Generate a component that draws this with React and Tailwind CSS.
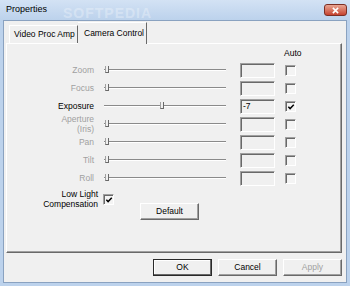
import React from "react";

const font = { fontFamily: '"Liberation Sans", Arial, sans-serif' };

const rows = [
  { label: ["Zoom"], pos: 0 },
  { label: ["Focus"], pos: 0 },
  { label: ["Exposure"], pos: 55, enabled: true, value: "-7", auto: true },
  { label: ["Aperture", "(Iris)"], pos: 0 },
  { label: ["Pan"], pos: 0 },
  { label: ["Tilt"], pos: 0 },
  { label: ["Roll"], pos: 0 },
];

function Check({ checked }) {
  return (
    <div className="relative h-[11px] w-[11px] border-t border-l border-t-[#a0a0a0] border-l-[#a0a0a0] border-b border-r border-b-white border-r-white bg-[#f4f4f4] shadow-[inset_1px_1px_0_#696969]">
      {checked && (
        <svg viewBox="0 0 9 9" className="absolute left-[1px] top-[1px] h-[8px] w-[8px]">
          <path d="M1.5 4.2 L3.5 6.3 L7.6 2" fill="none" stroke="#000" strokeWidth="1.6" />
        </svg>
      )}
    </div>
  );
}

function Slider({ pos }) {
  return (
    <div className="relative flex h-[18px] w-[122px] items-center">
      <div className="h-[2px] w-full border-t border-t-[#8a8a8a] border-b border-b-white" />
      <div
        className="absolute top-[5px] h-[7px] w-[4px] border-r border-b border-r-[#696969] border-b-[#696969] border-l border-l-[#a0a0a0] bg-[#f0f0f0]"
        style={{ left: pos + 1 }}
      />
    </div>
  );
}

function Button({ children, primary, disabled }) {
  return (
    <div
      className={
        "flex h-[17px] w-[59px] items-center justify-center border text-[8.5px] bg-[#f0f0f0] " +
        (primary
          ? "border-[#2a2a2a] shadow-[inset_-1px_-1px_0_#696969,inset_1px_1px_0_#fff]"
          : "border-t-white border-l-white border-r-[#696969] border-b-[#696969] shadow-[inset_-1px_-1px_0_#a0a0a0]") +
        (disabled ? " text-[#a0a0a0]" : " text-black")
      }
    >
      {children}
    </div>
  );
}

export default function App() {
  return (
    <div style={font} className="flex h-[286px] w-[350px] flex-col bg-[#bcd2ec] text-[8.5px]">
      <div className="relative flex h-[20px] items-center justify-between bg-gradient-to-b from-[#d3e2f4] to-[#bcd2ec] pl-[6px] pr-[3px]">
        <span className="text-[9px] text-black">Properties</span>
        <span className="absolute left-[63px] top-[3px] text-[14px] font-bold tracking-[1px] text-white/30">SOFTPEDIA</span>
        <div className="flex h-[12px] w-[23px] items-center justify-center rounded-[3px] border border-[#7c2f24] bg-gradient-to-b from-[#e8a593] to-[#c5412f]">
          <svg viewBox="0 0 10 8" className="h-[7px] w-[9px]">
            <path d="M2 1 L8 7 M8 1 L2 7" stroke="#fff" strokeWidth="1.8" />
          </svg>
        </div>
      </div>

      <div className="mx-[3px] mb-[3px] flex flex-1 flex-col border border-[#8aa2c0] bg-[#f0f0f0]">
        <div className="flex h-[22px] items-end pl-[5px]">
          <div className="flex h-[18px] w-[69px] items-center border-t border-l border-r border-t-white border-l-white border-r-[#696969] pl-[4px] text-black">
            Video Proc Amp
          </div>
          <div className="relative z-10 -mb-px flex h-[22px] w-[69px] items-start border-t border-r border-t-white border-r-[#696969] bg-[#f0f0f0] pl-[6px] pt-[4px] text-black">
            Camera Control
          </div>
        </div>

        <div className="ml-[2px] h-[210px] w-[336px] border border-t-white border-l-white border-r-[#696969] border-b-[#696969] pt-[4px] shadow-[inset_-1px_-1px_0_#a0a0a0]">
          <div className="h-[10px] pl-[277px] leading-[10px] text-black">Auto</div>
          <div className="mt-[3px] flex flex-col">
            {rows.map((r, i) => (
              <div key={i} className="flex h-[18px] items-center">
                <div
                  className={
                    "w-[87px] text-right leading-[10px] " +
                    (r.enabled ? "text-black" : "text-[#a0a0a0]")
                  }
                >
                  {r.label.map((l) => (
                    <div key={l}>{l}</div>
                  ))}
                </div>
                <div className="ml-[10px]">
                  <Slider pos={r.pos} />
                </div>
                <div className="ml-[14px] flex h-[15px] w-[35px] items-center border-t border-l border-t-[#a0a0a0] border-l-[#a0a0a0] border-b border-r border-b-white border-r-white bg-[#f0f0f0] pl-[2px] text-black shadow-[inset_1px_1px_0_#696969]">
                  {r.value}
                </div>
                <div className="ml-[10px]">
                  <Check checked={r.auto} />
                </div>
              </div>
            ))}
          </div>

          <div className="mt-[2px] flex items-start">
            <div className="flex items-center">
              <div className="w-[91px] text-right leading-[10px] text-black">
                <div>Low Light</div>
                <div>Compensation</div>
              </div>
              <div className="ml-[5px]">
                <Check checked />
              </div>
            </div>
            <div className="ml-[26px] mt-[14px]">
              <Button>Default</Button>
            </div>
          </div>
        </div>

        <div className="mt-[6px] flex justify-end gap-[6px] pr-[4px]">
          <Button primary>OK</Button>
          <Button>Cancel</Button>
          <Button disabled>Apply</Button>
        </div>
      </div>
    </div>
  );
}
